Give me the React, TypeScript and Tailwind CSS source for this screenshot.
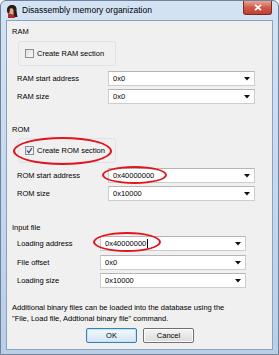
import type { ReactNode } from "react";

const font = { fontFamily: '"Liberation Sans", Arial, sans-serif' };

function Combo({ value, width, left, caret }: { value: string; width: number; left: number; caret?: boolean }) {
  return (
    <div
      className="relative flex h-[15px] items-center border border-[#cdcdcd] border-t-[#b5b5b5] bg-white pl-[4px] text-[7.5px] text-black"
      style={{ width, marginLeft: left }}
    >
      <span>{value}</span>
      {caret && <span className="ml-[1px] h-[9px] w-px bg-black" />}
      <svg className="absolute right-[4px] top-[5px]" width="6" height="4" viewBox="0 0 6 4">
        <path d="M0 0H6L3 3.5Z" fill="#111" />
      </svg>
    </div>
  );
}

function Row({ label, value, combo, caret }: { label: string; value: string; combo: "a" | "b"; caret?: boolean }) {
  return (
    <div className="relative flex h-[15px] items-center">
      <span className="absolute left-[10px] text-[7.5px] text-black">{label}</span>
      {combo === "a" ? (
        <Combo value={value} width={147} left={101} caret={caret} />
      ) : (
        <Combo value={value} width={146} left={93} caret={caret} />
      )}
    </div>
  );
}

function CheckGroup({ label, checked }: { label: string; checked?: boolean }) {
  return (
    <div className="ml-[11px] flex h-[25px] w-[98px] items-center rounded-[3px] border border-[#dde3e8] pl-[6px]">
      <div className="flex h-[9px] w-[9px] items-center justify-center border border-[#8f8f8f] bg-gradient-to-br from-[#dedede] to-[#fbfbfb]">
        {checked && (
          <svg width="7" height="7" viewBox="0 0 7 7">
            <path d="M1 3.6L2.8 5.6L6 1" fill="none" stroke="#3a4f8a" strokeWidth="1.3" />
          </svg>
        )}
      </div>
      <span className="ml-[3px] text-[7.5px] text-black">{label}</span>
    </div>
  );
}

function Section({ children }: { children: ReactNode }) {
  return <div className="ml-[5px] flex h-[12px] items-center text-[7.5px] text-black">{children}</div>;
}

function Ellipse({ x, y, w, h }: { x: number; y: number; w: number; h: number }) {
  return (
    <div
      className="pointer-events-none absolute rounded-[50%] border-[2px] border-[#e3141b]"
      style={{ left: x, top: y, width: w, height: h }}
    />
  );
}

function IdaIcon() {
  return (
    <svg width="14" height="14" viewBox="0 0 14 14">
      <path d="M2 6C2 2 5 0.5 8 1C11 1.5 12 4 11.5 7L12.5 13H9L8 9Z" fill="#2a1a14" />
      <path d="M4.5 5C5.5 4 8 4 8.5 6L8.5 9.5C8 11 6 11 5 9.5Z" fill="#e2a98a" />
      <path d="M3 10C4 9.5 8 10 9.5 11.5L10 14H3Z" fill="#b52a22" />
      <path d="M2 6C2 9 3 10 4.5 9.5L4.5 5Z" fill="#2a1a14" />
    </svg>
  );
}

export default function App() {
  return (
    <div
      className="relative h-[355px] w-[279px] overflow-hidden rounded-t-[6px] border border-[#6f8299] bg-gradient-to-b from-[#d3e3f4] via-[#c5d9ef] to-[#b9cfe8]"
      style={font}
    >
      {/* title bar */}
      <div className="flex h-[19px] items-center">
        <div className="ml-[4px]">
          <IdaIcon />
        </div>
        <span className="ml-[3px] text-[8.5px] text-black">Disassembly memory organization</span>
        <div className="ml-auto mr-[6px] flex h-[14px] w-[29px] items-center justify-center self-start rounded-b-[3px] border border-t-0 border-[#7a2a1e] bg-gradient-to-b from-[#e8a493] via-[#d0594a] to-[#c2402e]">
          <svg width="8" height="7" viewBox="0 0 8 7">
            <path d="M1 0.8L7 6.2M7 0.8L1 6.2" stroke="#fff" strokeWidth="1.8" />
          </svg>
        </div>
      </div>

      {/* client area */}
      <div className="relative ml-[5px] h-[330px] w-[267px] border border-[#8ba2bd] bg-[#f0f0f0]">
        <div className="flex flex-col">
          <div className="mt-[5px]">
            <Section>RAM</Section>
          </div>
          <div className="mt-[3px]">
            <CheckGroup label="Create RAM section" />
          </div>
          <div className="mt-[5px]">
            <Row label="RAM start address" value="0x0" combo="a" />
          </div>
          <div className="mt-[3px]">
            <Row label="RAM size" value="0x0" combo="a" />
          </div>

          <div className="mt-[20px]">
            <Section>ROM</Section>
          </div>
          <div className="mt-[2px]">
            <CheckGroup label="Create ROM section" checked />
          </div>
          <div className="mt-[5px]">
            <Row label="ROM start address" value="0x40000000" combo="a" />
          </div>
          <div className="mt-[3px]">
            <Row label="ROM size" value="0x10000" combo="a" />
          </div>

          <div className="mt-[21px]">
            <Section>Input file</Section>
          </div>
          <div className="mt-[2px]">
            <Row label="Loading address" value="0x40000000" combo="b" caret />
          </div>
          <div className="mt-[4px]">
            <Row label="File offset" value="0x0" combo="b" />
          </div>
          <div className="mt-[3px]">
            <Row label="Loading size" value="0x10000" combo="b" />
          </div>

          <div className="ml-[5px] mt-[14px] text-[7.5px] leading-[11px] text-black">
            <div>Additional binary files can be loaded into the database using the</div>
            <div>"File, Load file, Addtional binary file" command.</div>
          </div>

          <div className="mt-[4px] flex gap-[6px] pl-[79px]">
            <button className="flex h-[15px] w-[51px] items-center justify-center rounded-[2px] border border-[#3c7fb1] bg-gradient-to-b from-[#f2f8fc] to-[#d4e6f3] text-[7.5px] text-black shadow-[inset_0_0_0_1px_#bfe3f8]">
              OK
            </button>
            <button className="flex h-[15px] w-[51px] items-center justify-center rounded-[2px] border border-[#707070] bg-gradient-to-b from-[#f4f4f4] to-[#dcdcdc] text-[7.5px] text-black shadow-[inset_0_0_0_1px_#fcfcfc]">
              Cancel
            </button>
          </div>
        </div>

        <Ellipse x={6} y={116} w={99} h={28} />
        <Ellipse x={95} y={145} w={65} h={18} />
        <Ellipse x={86} y={211} w={68} h={20} />
      </div>
    </div>
  );
}
